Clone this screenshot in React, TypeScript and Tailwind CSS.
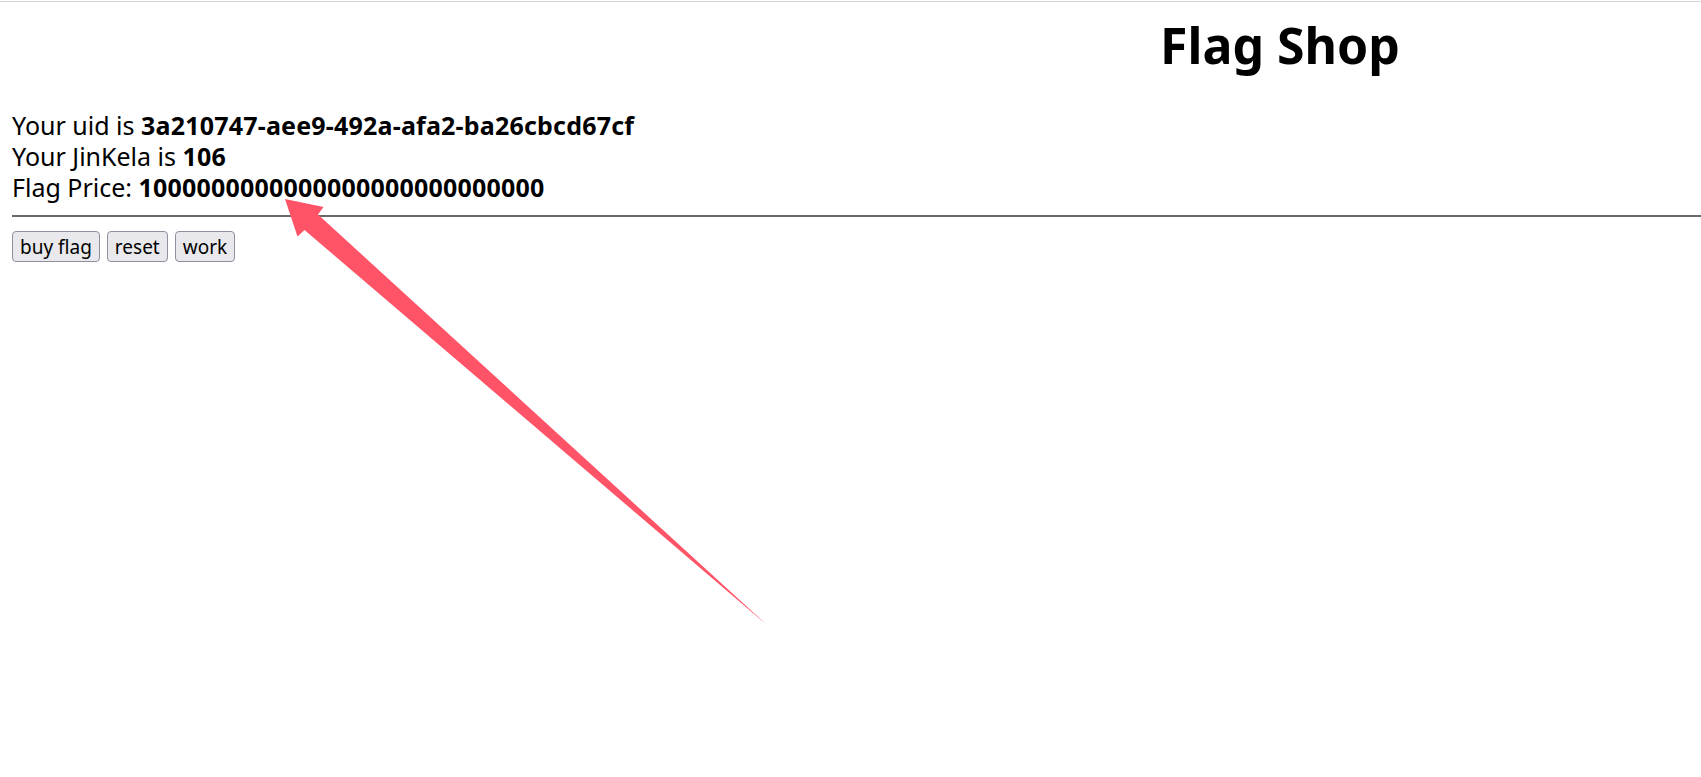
const info = [
  { label: "Your uid is ", value: "3a210747-aee9-492a-afa2-ba26cbcd67cf" },
  { label: "Your JinKela is ", value: "106" },
  { label: "Flag Price: ", value: "1000000000000000000000000000" },
];

const actions = ["buy flag", "reset", "work"];

export default function App() {
  return (
    <div className="relative min-h-[777px] w-full overflow-hidden bg-white text-black font-['Noto_Sans',_'Open_Sans',_sans-serif]">
      {/* window edge */}
      <div className="mt-px h-px w-full bg-[#d4d4d4]" />

      {/* page is wider than the capture, title centred on it */}
      <div className="w-[2560px] pt-[10px]">
        <h1 className="text-center text-[50px] font-bold leading-[66px]">Flag Shop</h1>
      </div>

      <div className="pl-[12px] pt-[32px] text-[25px] leading-[31px]">
        {info.map(({ label, value }) => (
          <div key={label}>
            {label}
            <b className="font-bold tracking-[0.2px]">{value}</b>
          </div>
        ))}
      </div>

      <div className="ml-[12px] mt-[12px] h-[2px] bg-[#6a6a6a]" />

      <div className="flex gap-[7px] pl-[12px] pt-[14px]">
        {actions.map((a) => (
          <button
            key={a}
            className="h-[31px] rounded-[4px] border border-[#8f8f9d] bg-[#e9e9ed] px-[7px] text-[19px] leading-[28px] text-black"
          >
            {a}
          </button>
        ))}
      </div>

      {/* annotation arrow */}
      <svg className="pointer-events-none absolute left-0 top-0" width="1701" height="777">
        <polygon
          points="285,199 323.5,207 318,214.5 767,625 304.5,230 297.5,236.5"
          fill="#ff5467"
        />
      </svg>
    </div>
  );
}
